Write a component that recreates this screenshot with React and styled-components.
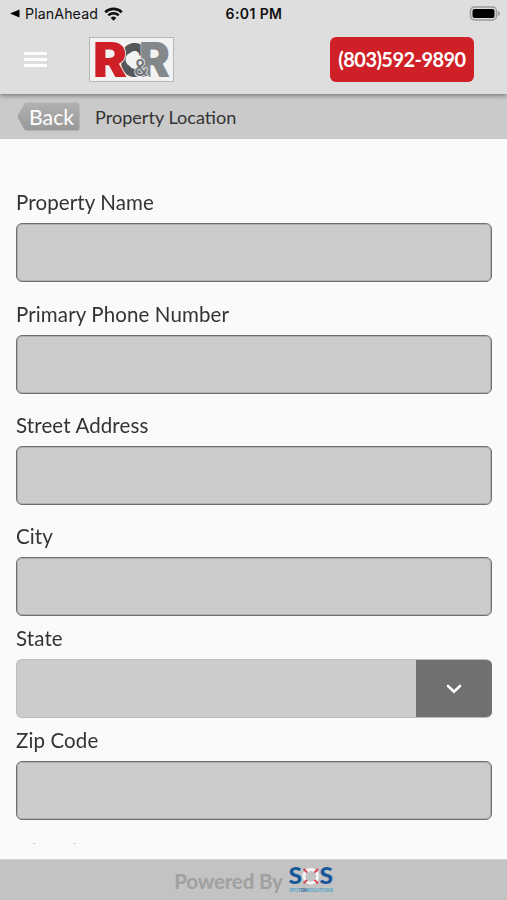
import styled, { createGlobalStyle } from "styled-components";

const fields = [
  { label: "Property Name", space: 16.7 },
  { label: "Primary Phone Number", space: 15.7 },
  { label: "Street Address", space: 16.2 },
  { label: "City", space: 7.2 },
  { label: "State", type: "select", space: 7.4 },
  { label: "Zip Code", space: 15.8 },
  { label: "Directions to Property", space: 16.2 },
];

export default function App() {
  return (
    <Screen>
      <GlobalStyle />
      <Header>
        <StatusBar>
          <StatusLeft>
            <BackArrow viewBox="0 0 10 8">
              <path d="M0 4 9.5 0v8z" />
            </BackArrow>
            <AppName>PlanAhead</AppName>
            <WifiIcon />
          </StatusLeft>
          <Time>6:01 PM</Time>
          <StatusRight>
            <BatteryIcon />
          </StatusRight>
        </StatusBar>
        <Toolbar>
          <MenuButton aria-label="menu">
            <span />
            <span />
            <span />
          </MenuButton>
          <LogoBox>
            <RcrLogo />
          </LogoBox>
          <PhoneButton>(803)592-9890</PhoneButton>
        </Toolbar>
      </Header>

      <SubHeader>
        <BackButton>
          <BackShape viewBox="0 0 63 29">
            <defs>
              <linearGradient id="back" x1="0" y1="0" x2="0" y2="1">
                <stop offset="0" stopColor="#b1b1b1" />
                <stop offset="1" stopColor="#989898" />
              </linearGradient>
            </defs>
            <path
              d="M9.5.5H60q2.5 0 2.5 2.5v23q0 2.5-2.5 2.5H9.500q-1.500 0-2.200-1.300L.8 15.500q-.5-1 0-2L7.300 1.800Q8 .5 9.500.5z"
              fill="url(#back)"
            />
          </BackShape>
          <BackText>Back</BackText>
        </BackButton>
        <PageTitle>Property Location</PageTitle>
      </SubHeader>

      <Form>
        {fields.map((field) => (
          <Field key={field.label} $space={field.space}>
            <Label>{field.label}</Label>
            {field.type === "select" ? (
              <Select>
                <SelectButton>
                  <svg width="16" height="10" viewBox="0 0 16 10" fill="none">
                    <path
                      d="M2 2 8 7.800 14 2"
                      stroke="#fff"
                      strokeWidth="2.600"
                      strokeLinecap="round"
                    />
                  </svg>
                </SelectButton>
              </Select>
            ) : (
              <Input />
            )}
          </Field>
        ))}
      </Form>

      <Footer>
        <Powered>Powered By</Powered>
        <SosLogo />
      </Footer>
    </Screen>
  );
}

function WifiIcon() {
  return (
    <svg width="19" height="14" viewBox="0 0 19 14" fill="none" stroke="#111">
      <path d="M1.200 5.200a12 12 0 0 1 16.600 0" strokeWidth="2.600" />
      <path d="M4.300 8.400a7.500 7.500 0 0 1 10.400 0" strokeWidth="2.500" />
      <path d="M9.500 13.700 6.700 10.900a4 4 0 0 1 5.600 0z" fill="#111" stroke="none" />
    </svg>
  );
}

function BatteryIcon() {
  return (
    <svg width="31" height="15" viewBox="0 0 31 15">
      <rect x="1.500" y="1" width="26" height="13" rx="4" fill="#ddd" stroke="#999" strokeWidth="1.500" />
      <rect x="3.500" y="3" width="22" height="9" rx="2" fill="#000" />
      <path d="M29 5q2 .8 2 2.500t-2 2.500z" fill="#999" />
    </svg>
  );
}

function RcrLogo() {
  return (
    <svg width="83" height="43" viewBox="0 0 83 43" fontFamily="Inter, sans-serif" fontWeight="900">
      <text x="29.500" y="38.500" fontSize="47" textLength="29" lengthAdjust="spacingAndGlyphs" fill="#55585b">
        C
      </text>
      <text
        x="49"
        y="39"
        fontSize="48"
        textLength="31"
        lengthAdjust="spacingAndGlyphs"
        fill="#85888b"
        stroke="#f2f2f2"
        strokeWidth="1"
        paintOrder="stroke"
      >
        R
      </text>
      <text
        x="3"
        y="39"
        fontSize="48"
        textLength="34"
        lengthAdjust="spacingAndGlyphs"
        fill="#cf1f27"
        stroke="#f2f2f2"
        strokeWidth="1.500"
        paintOrder="stroke"
      >
        R
      </text>
      <circle cx="42.500" cy="21.500" r="7" fill="#f2f2f2" />
      <text
        x="44"
        y="37.500"
        fontSize="23"
        fontWeight="500"
        textLength="14"
        lengthAdjust="spacingAndGlyphs"
        fill="#73767a"
        stroke="#f2f2f2"
        strokeWidth="1.500"
        paintOrder="stroke"
      >
        &amp;
      </text>
    </svg>
  );
}

function SosLogo() {
  return (
    <svg width="47" height="28" viewBox="0 0 47 28" fontFamily="Lato, sans-serif" fontWeight="900">
      <text x="0.500" y="18" fontSize="22" textLength="13.500" lengthAdjust="spacingAndGlyphs" fill="#16589a">
        S
      </text>
      <text x="31.500" y="18" fontSize="22" textLength="13.500" lengthAdjust="spacingAndGlyphs" fill="#16589a">
        S
      </text>
      <circle cx="22.800" cy="10.200" r="6.800" fill="none" stroke="#f4f4f4" strokeWidth="3" />
      <path
        d="M15.600 3l3.600 3.600M30 3l-3.600 3.600M15.600 17.400l3.600-3.600M30 17.400l-3.600-3.600"
        stroke="#d93a50"
        strokeWidth="1.800"
      />
      <text x="1" y="26" fontSize="6" textLength="44" lengthAdjust="spacingAndGlyphs" fill="#4fa3c7">
        SPOT<tspan fill="#16589a">ON</tspan>SOLUTIONS
      </text>
    </svg>
  );
}

const GlobalStyle = createGlobalStyle`
  * {
    box-sizing: border-box;
  }

  body {
    margin: 0;
    background-color: #fafafa;
    font-family: "Lato", sans-serif;
    color: #333333;
  }
`;

const Screen = styled.div`
  height: 900px;
  display: flex;
  flex-direction: column;
  overflow: hidden;
`;

const Header = styled.div`
  height: 94px;
  flex-shrink: 0;
  background-color: #dedede;
  box-shadow: 0 1px 5px rgba(0, 0, 0, 0.5);
  z-index: 1;
`;

const StatusBar = styled.div`
  height: 27px;
  padding: 0 7px 0 10px;
  display: grid;
  grid-template-columns: 1fr auto 1fr;
  align-items: center;
  font-family: "Inter", sans-serif;
  color: #111111;
`;

const StatusLeft = styled.div`
  display: flex;
  align-items: center;
`;

const StatusRight = styled.div`
  display: flex;
  justify-content: flex-end;
`;

const BackArrow = styled.svg`
  width: 10px;
  height: 9px;
  margin-right: 5px;
`;

const AppName = styled.span`
  width: 79px;
  font-size: 14.2px;
  letter-spacing: 0.1px;
`;

const Time = styled.div`
  margin-right: 2px;
  font-size: 14px;
  font-weight: 600;
  letter-spacing: 0.4px;
`;

const Toolbar = styled.div`
  height: 67px;
  padding: 10px 33px 0 24px;
  display: flex;
  align-items: flex-start;
`;

const MenuButton = styled.div`
  width: 23px;
  margin: 15px 42px 0 0;
  display: flex;
  flex-direction: column;
  gap: 3px;

  span {
    height: 3px;
    background-color: #ffffff;
  }
`;

const LogoBox = styled.div`
  width: 85px;
  height: 45px;
  border: 1px solid #b5b7b9;
  background-color: #f2f2f2;
  display: flex;
`;

const PhoneButton = styled.div`
  width: 144px;
  height: 45px;
  margin-left: auto;
  padding-bottom: 1px;
  border-radius: 6px;
  background-color: #d02027;
  color: #ffffff;
  display: flex;
  align-items: center;
  justify-content: center;
  font-size: 20px;
  font-weight: 700;
  letter-spacing: -0.55px;
  white-space: nowrap;
`;

const SubHeader = styled.div`
  height: 45px;
  flex-shrink: 0;
  padding: 0 17px;
  display: flex;
  align-items: center;
  background-color: #cacaca;
`;

const BackButton = styled.div`
  width: 63px;
  height: 29px;
  display: grid;
  align-items: center;
`;

const BackShape = styled.svg`
  grid-area: 1 / 1;
  width: 63px;
  height: 29px;
`;

const BackText = styled.span`
  grid-area: 1 / 1;
  padding-left: 12px;
  font-size: 21.3px;
  color: #ffffff;
`;

const PageTitle = styled.div`
  margin-left: 15px;
  font-size: 18.1px;
`;

/* the list fades out right above the footer */
const Form = styled.div`
  height: 706px;
  flex-shrink: 0;
  padding: 48.3px 15px 0 16px;
  overflow: hidden;
  mask-image: linear-gradient(to top, transparent 0.5px, #000 4px);
`;

const Field = styled.div`
  margin-bottom: ${({ $space }) => $space}px;
`;

const Label = styled.div`
  height: 36px;
  line-height: 31px;
  font-size: 20.5px;
  letter-spacing: 0.12px;
`;

const Input = styled.input`
  display: block;
  width: 100%;
  height: 59px;
  border: 1px solid #707070;
  border-radius: 6px;
  background-color: #cccccc;
  box-shadow: inset 0 0 0 1px rgba(0, 0, 0, 0.14);
`;

const Select = styled.div`
  height: 59px;
  border: 1px solid #bcbcbc;
  border-right: none;
  border-radius: 6px;
  background-color: #cccccc;
  display: flex;
  justify-content: flex-end;
  overflow: hidden;
`;

const SelectButton = styled.div`
  width: 76px;
  background-color: #707070;
  display: flex;
  align-items: center;
  justify-content: center;
`;

const Footer = styled.div`
  height: 41px;
  margin-top: auto;
  padding-left: 2px;
  background-color: #c3c3c3;
  border-top: 1px solid #d0d0d0;
  display: flex;
  align-items: center;
  justify-content: center;
  gap: 5px;
`;

const Powered = styled.span`
  margin-top: 2px;
  font-size: 20.6px;
  font-weight: 700;
  letter-spacing: -0.2px;
  color: #a0a0a0;
`;
